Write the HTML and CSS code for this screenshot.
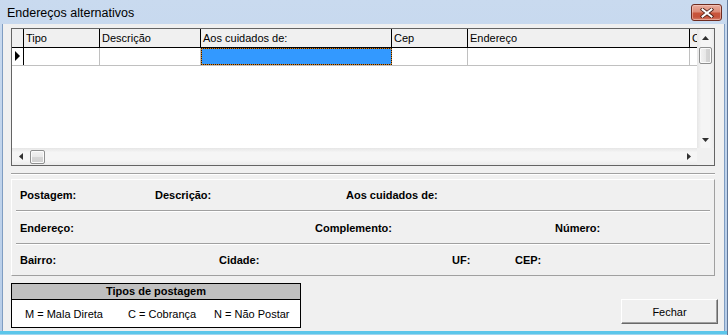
FILE: index.html
```html
<!DOCTYPE html>
<html lang="pt-BR">
<head>
<meta charset="utf-8">
<title>Endereços alternativos</title>
<link rel="stylesheet" href="styles.css">
</head>
<body>
<div class="window">
  <div class="titlebar">
    <span class="title">Endereços alternativos</span>
    <button class="close" aria-label="Fechar">
      <svg width="14" height="10" viewBox="0 0 14 10">
        <path d="M2.5 1.5 L11.5 8.5 M11.5 1.5 L2.5 8.5" stroke="#4a1c14" stroke-width="3.6" stroke-linecap="square" fill="none"/>
        <path d="M2.5 1.5 L11.5 8.5 M11.5 1.5 L2.5 8.5" stroke="#ffffff" stroke-width="2" stroke-linecap="square" fill="none"/>
      </svg>
    </button>
  </div>
  <div class="client">
    <div class="grid">
      <div class="grid-top">
        <div class="grid-view">
          <div class="grow ghead">
            <div class="gc ind"></div>
            <div class="gc w-tipo">Tipo</div>
            <div class="gc w-desc">Descrição</div>
            <div class="gc w-aos">Aos cuidados de:</div>
            <div class="gc w-cep">Cep</div>
            <div class="gc w-end">Endereço</div>
            <div class="gc w-comp">Complemento</div>
          </div>
          <div class="grow gdata">
            <div class="gc ind">
              <svg class="pointer" width="10" height="16" viewBox="0 0 10 16"><polygon points="2,3 7,8 2,13" fill="#000"/></svg>
            </div>
            <div class="gc w-tipo"></div>
            <div class="gc w-desc"></div>
            <div class="gc w-aos sel"></div>
            <div class="gc w-cep"></div>
            <div class="gc w-end"></div>
            <div class="gc w-comp"></div>
          </div>
        </div>
        <div class="vscroll">
          <div class="sb-btn"><svg width="7" height="4" viewBox="0 0 7 4"><polygon points="0,4 3.5,0 7,4" fill="#303030"/></svg></div>
          <div class="thumb-v"></div>
          <div class="sb-fill"></div>
          <div class="sb-btn"><svg width="7" height="4" viewBox="0 0 7 4"><polygon points="0,0 7,0 3.5,4" fill="#303030"/></svg></div>
        </div>
      </div>
      <div class="grid-bottom">
        <div class="hscroll">
          <div class="sb-btn"><svg width="4" height="7" viewBox="0 0 4 7"><polygon points="4,0 4,7 0,3.5" fill="#303030"/></svg></div>
          <div class="thumb-h"></div>
          <div class="sb-fill"></div>
          <div class="sb-btn"><svg width="4" height="7" viewBox="0 0 4 7"><polygon points="0,0 4,3.5 0,7" fill="#303030"/></svg></div>
        </div>
        <div class="corner"></div>
      </div>
    </div>

    <div class="etched"></div>

    <div class="panel">
      <div class="frow r1">
        <span class="lbl">Postagem:</span>
        <span class="lbl">Descrição:</span>
        <span class="lbl">Aos cuidados de:</span>
      </div>
      <div class="fsep"></div>
      <div class="frow r2">
        <span class="lbl">Endereço:</span>
        <span class="lbl">Complemento:</span>
        <span class="lbl">Número:</span>
      </div>
      <div class="fsep"></div>
      <div class="frow r3">
        <span class="lbl">Bairro:</span>
        <span class="lbl">Cidade:</span>
        <span class="lbl">UF:</span>
        <span class="lbl">CEP:</span>
      </div>
    </div>

    <div class="bottom">
      <div class="tipos">
        <div class="tipos-head">Tipos de postagem</div>
        <div class="tipos-body">
          <span class="t1">M = Mala Direta</span>
          <span class="t2">C = Cobrança</span>
          <span class="t3">N = Não Postar</span>
        </div>
      </div>
      <button class="fechar">Fechar</button>
    </div>
  </div>
</div>
</body>
</html>
```

FILE: styles.css
```css
* { box-sizing: border-box; }

html, body {
  margin: 0;
  padding: 0;
}

body {
  width: 728px;
  height: 335px;
  overflow: hidden;
  font-family: "Liberation Sans", Arial, sans-serif;
  font-size: 11px;
  color: #000;
}

.window {
  width: 728px;
  height: 335px;
  display: flex;
  flex-direction: column;
  background: linear-gradient(to bottom, #c9daef 0, #b7cde8 331px, #5cc6ea 331px, #5cc6ea 334px, #9fd6ee 334px);
  border-right: 1px solid #61789a;
}

/* ---------- title bar ---------- */
.titlebar {
  height: 24px;
  flex: none;
  display: flex;
  justify-content: space-between;
  align-items: flex-start;
  padding: 0 5px 0 7px;
}

.title {
  font-family: "Liberation Sans", Arial, sans-serif;
  font-size: 12.5px;
  line-height: 22px;
  padding-top: 2px;
  color: #000;
}

.close {
  width: 31px;
  height: 17px;
  margin-top: 4px;
  padding: 0;
  border: 1px solid #6e2b20;
  border-radius: 3px;
  background: linear-gradient(to bottom, #e9ada0 0%, #dc8c78 45%, #c9543a 55%, #c5533c 80%, #d7806b 100%);
  box-shadow: inset 0 0 0 1px rgba(255, 220, 210, 0.45);
  display: flex;
  align-items: center;
  justify-content: center;
}

/* ---------- client area ---------- */
.client {
  flex: 1;
  margin: 0 2px 4px 2px;
  border-left: 1px solid #7f9dc2;
  border-right: 1px solid #7f9dc2;
  background: #f0f0f0;
  padding: 4px 8px 0 8px;
  display: flex;
  flex-direction: column;
}

/* ---------- grid ---------- */
.grid {
  width: 704px;
  height: 138px;
  border: 1px solid #646464;
  background: #fff;
  display: flex;
  flex-direction: column;
}

.grid-top {
  height: 119px;
  display: flex;
}

.grid-view {
  width: 685px;
  overflow: hidden;
  background: #fff;
}

.grow {
  display: flex;
  width: 700px;
}

.ghead {
  height: 19px;
  background: #f0f0f0;
  border-bottom: 1px solid #000;
}

.gdata {
  height: 18px;
  border-bottom: 1px solid #c0c0c0;
}

.gc {
  flex: none;
  height: 100%;
  padding-left: 2px;
  white-space: nowrap;
  overflow: hidden;
}

.ghead .gc {
  line-height: 18px;
  border-right: 1px solid #000;
}

.gdata .gc {
  border-right: 1px solid #c0c0c0;
}

.ind { width: 12px; padding-left: 0; }
.gdata .ind { border-right: 1px solid #000; background: #fff; }
.w-tipo { width: 76px; }
.w-desc { width: 101px; }
.w-aos { width: 191px; }
.w-cep { width: 76px; }
.w-end { width: 222px; }
.w-comp { width: 40px; }

.pointer { display: block; margin-left: 1px; }

.gdata .sel {
  border: 1px dotted #1a1a1a;
  background: linear-gradient(#3399ff, #3399ff) padding-box, #e07f10 border-box;
}

/* ---------- scrollbars ---------- */
.vscroll {
  width: 17px;
  display: flex;
  flex-direction: column;
  background: linear-gradient(to right, #e6e6e6 0, #f5f5f5 25%, #f5f5f5 75%, #ebebeb 100%);
}

.hscroll {
  width: 685px;
  display: flex;
  background: linear-gradient(to bottom, #e6e6e6 0, #f5f5f5 25%, #f5f5f5 75%, #ebebeb 100%);
}

.sb-btn {
  width: 17px;
  height: 17px;
  flex: none;
  display: flex;
  align-items: center;
  justify-content: center;
}

.sb-btn svg { display: block; }

.sb-fill { flex: 1; }

.thumb-v {
  width: 13px;
  height: 17px;
  margin: 1px 0 0 2px;
  border: 1px solid #8e8f8f;
  border-radius: 2px;
  background: linear-gradient(to right, #f2f2f2 0, #e8e8e8 50%, #d6d6d6 51%, #d0d0d0 100%);
  box-shadow: inset 0 0 0 1px #fbfbfb;
}

.thumb-h {
  width: 15px;
  height: 14px;
  margin: 2px 0 0 1px;
  border: 1px solid #8e8f8f;
  border-radius: 2px;
  background: linear-gradient(to bottom, #f2f2f2 0, #e8e8e8 50%, #d6d6d6 51%, #d0d0d0 100%);
  box-shadow: inset 0 0 0 1px #fbfbfb;
}

.grid-bottom {
  height: 17px;
  display: flex;
}

.corner {
  width: 17px;
  background: #f0f0f0;
}

/* ---------- etched line ---------- */
.etched {
  width: 704px;
  height: 2px;
  margin-top: 7px;
  border-top: 1px solid #a0a0a0;
  border-bottom: 1px solid #ffffff;
}

/* ---------- fields panel ---------- */
.panel {
  width: 704px;
  height: 97px;
  margin-top: 4px;
  border-top: 1px solid #ffffff;
  border-left: 1px solid #ffffff;
  border-right: 1px solid #a0a0a0;
  border-bottom: 1px solid #a0a0a0;
  display: flex;
  flex-direction: column;
}

.frow {
  display: flex;
  align-items: center;
  padding-left: 8px;
}

.r1 { height: 30px; }
.r2 { height: 31px; }
.r3 { height: 30px; }

.lbl {
  font-weight: bold;
  font-size: 11px;
  white-space: nowrap;
  flex: none;
}

.r1 .lbl:nth-child(1) { width: 135px; }
.r1 .lbl:nth-child(2) { width: 191px; }
.r2 .lbl:nth-child(1) { width: 295px; }
.r2 .lbl:nth-child(2) { width: 240px; }
.r3 .lbl:nth-child(1) { width: 199px; }
.r3 .lbl:nth-child(2) { width: 233px; }
.r3 .lbl:nth-child(3) { width: 63px; }

.fsep {
  height: 2px;
  margin: 0 4px;
  border-top: 1px solid #a0a0a0;
  border-bottom: 1px solid #ffffff;
}

/* ---------- bottom ---------- */
.bottom {
  display: flex;
  justify-content: space-between;
  align-items: flex-start;
  margin-top: 7px;
  margin-right: -2px;
}

.tipos {
  width: 290px;
  border: 1px solid #000;
  background: #fff;
}

.tipos-head {
  height: 16px;
  line-height: 15px;
  background: #c0c0c0;
  border-bottom: 1px solid #000;
  text-align: center;
  font-weight: bold;
}

.tipos-body {
  height: 27px;
  display: flex;
  align-items: center;
  padding-left: 13px;
  white-space: nowrap;
}

.t1 { width: 103px; }
.t2 { width: 86px; }

.fechar {
  width: 97px;
  height: 25px;
  margin-top: 16px;
  padding: 0;
  font-family: "Liberation Sans", Arial, sans-serif;
  font-size: 11px;
  color: #000;
  background: #f0f0f0;
  border: 1px solid;
  border-color: #ffffff #696969 #696969 #ffffff;
  box-shadow: inset -1px -1px 0 #a0a0a0;
}
```
